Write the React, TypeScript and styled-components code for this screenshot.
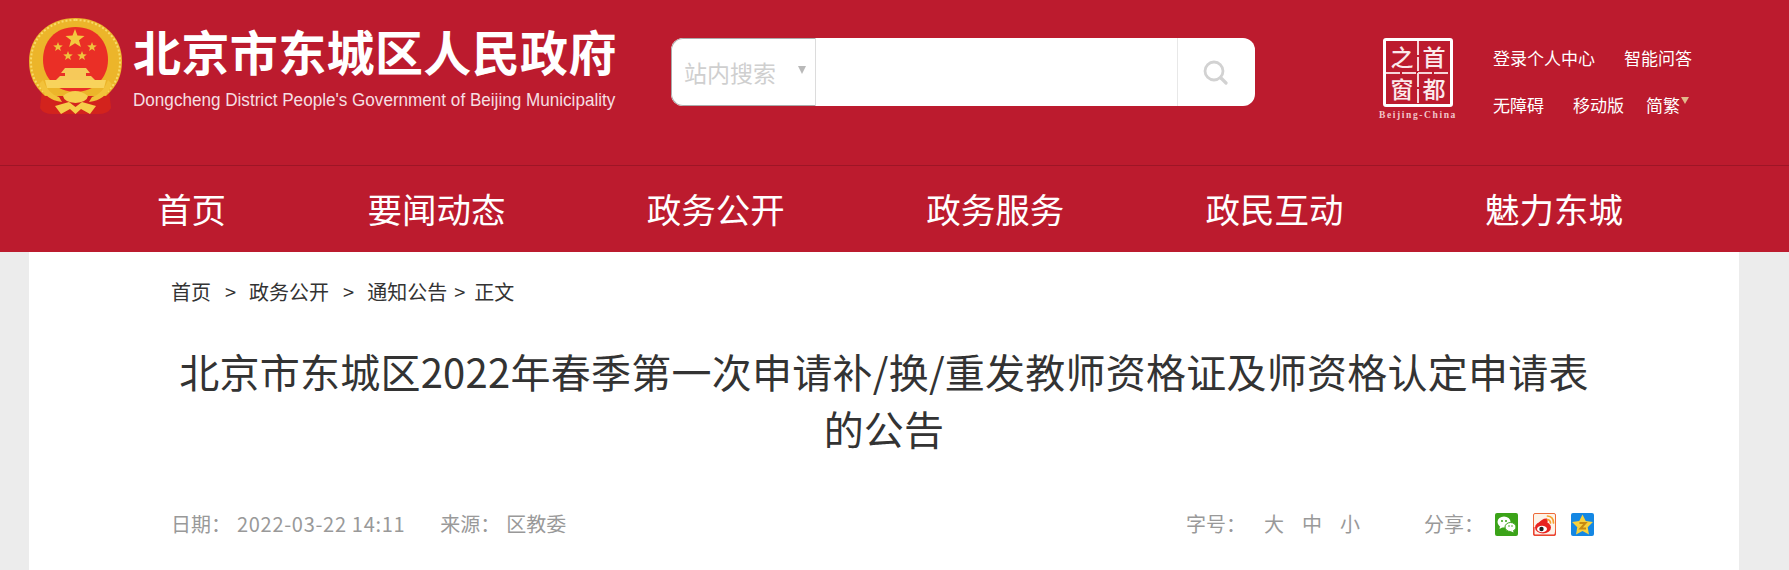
import styled, { createGlobalStyle } from 'styled-components';

const RED = '#bc1b2e';
const CJK = `'Noto Sans CJK SC', 'Liberation Sans', sans-serif`;

const GlobalStyle = createGlobalStyle`
  html, body {
    margin: 0;
    padding: 0;
    background: #ececec;
    font-family: ${CJK};
    overflow: hidden;
  }
  * { box-sizing: border-box; }
`;

const Page = styled.div`
  width: 1789px;
  height: 570px;
  overflow: hidden;
`;

const Header = styled.header`
  height: 166px;
  background: ${RED};
  border-bottom: 1px solid #9e1526;
  display: flex;
  align-items: flex-start;
  padding: 18px 0 0 29px;
`;

const Brand = styled.div`
  display: flex;
  width: 642px;
  gap: 11px;
`;

const BrandText = styled.div`
  display: flex;
  flex-direction: column;
  padding-top: 2px;
  color: #fff;
`;

const BrandName = styled.div`
  font-size: 48px;
  font-weight: 700;
  line-height: 60px;
  letter-spacing: 0.38px;
  white-space: nowrap;
`;

const BrandEn = styled.div`
  font-family: 'Liberation Sans', sans-serif;
  font-size: 18px;
  line-height: 20px;
  margin-top: 10px;
  white-space: nowrap;
  color: #f6dfe2;
  transform: scaleX(0.95);
  transform-origin: left center;
`;

const Search = styled.div`
  width: 584px;
  height: 68px;
  margin-top: 20px;
  display: flex;
  border-radius: 12px;
  background: #fff;
  overflow: hidden;
`;

const SearchSelect = styled.div`
  width: 145px;
  display: flex;
  align-items: center;
  justify-content: space-between;
  padding: 0 9px 0 12px;
  border: 1px solid #ababab;
  border-right: 1px solid #dcdcdc;
  border-radius: 12px 0 0 12px;
  color: #cfcfcf;
  font-size: 23px;
`;

const Caret = styled.i<{ $color?: string }>`
  width: 0;
  height: 0;
  margin-bottom: 4px;
  border-left: 4px solid transparent;
  border-right: 4px solid transparent;
  border-top: 8px solid ${(p) => p.$color || '#b9b9b9'};
`;

const SearchInput = styled.div`
  flex: 1;
`;

const SearchButton = styled.div`
  width: 78px;
  border-left: 1px solid #e8e8e8;
  display: flex;
  align-items: center;
  justify-content: center;
  padding-right: 3px;
`;

const CityMark = styled.div`
  width: 72px;
  margin: 20px 0 0 127px;
  display: flex;
  flex-direction: column;
  align-items: center;
`;

const CityGrid = styled.div`
  width: 70px;
  height: 69px;
  border: 3px solid #fff;
  border-radius: 3px;
  display: grid;
  grid-template-columns: 1fr 1fr;
  grid-template-rows: 1fr 1fr;
  color: #fbe9eb;
  font-size: 23px;
  font-weight: 500;
  line-height: 1;
  background:
    repeating-linear-gradient(#f6d5d9 0 14px, transparent 14px 16px) center / 2px 100% no-repeat,
    repeating-linear-gradient(90deg, #f6d5d9 0 14px, transparent 14px 16px) center / 100% 2px no-repeat;
`;

const CityCell = styled.span`
  display: flex;
  align-items: center;
  justify-content: center;
`;

const CityEn = styled.div`
  font-family: 'Liberation Serif', serif;
  font-size: 9.5px;
  font-weight: 700;
  letter-spacing: 1.6px;
  line-height: 11px;
  margin-top: 3px;
  color: #f1c6cb;
  white-space: nowrap;
`;

const TopLinks = styled.div`
  margin: 27px 0 0 39px;
  display: flex;
  flex-direction: column;
  gap: 21px;
  color: #fff;
  font-size: 17px;
  line-height: 26px;
`;

const LinkRow = styled.div<{ $gap: number }>`
  display: flex;
  align-items: flex-start;
  gap: ${(p) => p.$gap}px;
  white-space: nowrap;
`;

const LangLink = styled.span`
  display: flex;
  align-items: flex-start;
  margin-left: -7px;
  ${Caret} {
    margin: 5px 0 0 1px;
    border-left-width: 4px;
    border-right-width: 4px;
    border-top-width: 7px;
  }
`;

const Nav = styled.nav`
  height: 86px;
  background: ${RED};
  display: flex;
  align-items: center;
  gap: 141.4px;
  padding: 0 0 2px 157px;
  color: #fff;
  font-size: 34.5px;
  white-space: nowrap;
`;

const Article = styled.main`
  width: 1710px;
  height: 318px;
  margin-left: 29px;
  background: #fff;
  padding: 26px 142px 0;
`;

const Crumbs = styled.div`
  display: flex;
  font-size: 20px;
  line-height: 28px;
  color: #333;
  white-space: nowrap;
`;

const CrumbSep = styled.span<{ $tight?: boolean }>`
  margin: ${(p) => (p.$tight ? '0 9px 0 7px' : '0 13px 0 14px')};
`;

const Title = styled.h1`
  margin: 37px 0 0;
  font-size: 40px;
  font-weight: 400;
  line-height: 57px;
  letter-spacing: 0.25px;
  text-align: center;
  color: #333;
`;

const Meta = styled.div`
  margin-top: 53px;
  display: flex;
  align-items: center;
  font-size: 20px;
  line-height: 28px;
  color: #999;
  white-space: nowrap;
`;

const MetaLabel = styled.span<{ $gap: number; $left?: number }>`
  margin-left: ${(p) => p.$left || 0}px;
  margin-right: ${(p) => p.$gap}px;
`;

const MetaDate = styled.span`
  letter-spacing: 0.7px;
  margin-right: 35px;
`;

const MetaSpacer = styled.div`
  flex: 1;
`;

const SizeButton = styled.span`
  margin-right: 18px;
`;

const ShareButton = styled.a`
  display: block;
  width: 23px;
  height: 23px;
  margin-right: 15px;
  &:last-child { margin-right: 3px; }
  svg { display: block; }
`;

const EmblemSvg = styled.svg`
  flex-shrink: 0;
`;

const Star = ({ x, y, r, fill = '#f6d23c', inner = 0.42 }: { x: number; y: number; r: number; fill?: string; inner?: number }) => {
  const pts = Array.from({ length: 10 }, (_, i) => {
    const a = -Math.PI / 2 + (i * Math.PI) / 5;
    const d = i % 2 ? r * inner : r;
    return `${(x + d * Math.cos(a)).toFixed(2)},${(y + d * Math.sin(a)).toFixed(2)}`;
  }).join(' ');
  return <polygon points={pts} fill={fill} />;
};

const Emblem = () => (
  <EmblemSvg width="93" height="98" viewBox="0 0 93 98">
    <path d="M13 72 L11 90 Q14 96 24 96 L69 96 Q79 96 82 90 L80 72 Z" fill="#d3231d" />
    <path d="M46.5 0 C20 0 0 18 0 43 C0 58 5 68 16 78 L77 78 C88 68 93 58 93 43 C93 18 73 0 46.5 0 Z" fill="#ecb52a" />
    <path d="M46.5 2 C21 2 2 19 2 43 C2 58 7 67 17 76" fill="none" stroke="#f8da6a" strokeWidth="2" strokeDasharray="2 2" />
    <path d="M46.5 2 C72 2 91 19 91 43 C91 58 86 67 76 76" fill="none" stroke="#f8da6a" strokeWidth="2" strokeDasharray="2 2" />
    <path d="M46.5 9 C26 9 14 23 14 42 C14 60 28 74 46.5 74 C65 74 79 60 79 42 C79 23 67 9 46.5 9 Z" fill="#ea2f26" />
    <Star x={46} y={21} r={10} fill="#f3c93f" />
    <Star x={29} y={29} r={5} fill="#f0c23c" />
    <Star x={63} y={29} r={5} fill="#f0c23c" />
    <Star x={39} y={38} r={5} fill="#f0c23c" />
    <Star x={53} y={38} r={5} fill="#f0c23c" />
    <path d="M36 50 H57 L61 55 H57 V58 H62 L66 62 H27 L31 58 H36 V55 H32 Z" fill="#f6c95a" />
    <path d="M16 62 H77 L75 70 H18 Z" fill="#f8d35c" />
    <path d="M10 66 Q16 82 33 84 L30 79 Q19 76 14 62 Z" fill="#f2c23a" />
    <path d="M83 66 Q77 82 60 84 L63 79 Q74 76 79 62 Z" fill="#f2c23a" />
    <path d="M34 78 Q46 68 59 78 Q58 84 46.5 85 Q35 84 34 78 Z" fill="#f6cf4f" />
    <path d="M26 88 L40 84 L46.5 89 L53 84 L67 88 L61 96 L52 91 L46.5 96 L41 91 L32 96 Z" fill="#f6cd4a" />
  </EmblemSvg>
);

const SearchIcon = () => (
  <svg width="26" height="26" viewBox="0 0 26 26" fill="none" stroke="#d2d2d2" strokeLinecap="round">
    <circle cx="12" cy="12" r="9" strokeWidth="2.8" />
    <path d="M19 19 L24 24" strokeWidth="3.2" />
  </svg>
);

const WeChatIcon = () => (
  <svg width="23" height="23" viewBox="0 0 23 23">
    <rect width="23" height="23" rx="2" fill="#3ba319" />
    <ellipse cx="9" cy="9" rx="6.5" ry="5.5" fill="#fff" />
    <path d="M5 13 L4.5 16 L8 14 Z" fill="#fff" />
    <ellipse cx="15.5" cy="14" rx="5.5" ry="4.5" fill="#fff" stroke="#3ba319" />
    <path d="M18 17 L18.5 19.5 L15.5 18 Z" fill="#fff" />
    <circle cx="7" cy="8" r="1" fill="#3ba319" />
    <circle cx="11" cy="8" r="1" fill="#3ba319" />
    <circle cx="14" cy="13" r=".8" fill="#3ba319" />
    <circle cx="17" cy="13" r=".8" fill="#3ba319" />
  </svg>
);

const WeiboIcon = () => (
  <svg width="23" height="23" viewBox="0 0 23 23">
    <rect x=".5" y=".5" width="22" height="22" rx="1.5" fill="#fdf3e8" stroke="#ee6a3a" />
    <path d="M.5 22.5 H22.5 V16 L21.5 21.5 H1.5 V14 H.5 Z" fill="#e8231f" />
    <ellipse cx="10" cy="14.5" rx="8" ry="6" fill="#e8231f" />
    <path d="M5 11 Q9 5 14 5.5 Q15.5 8 14 11 Z" fill="#e8231f" />
    <ellipse cx="9" cy="16" rx="5" ry="3.2" fill="#fff" />
    <circle cx="8.5" cy="16" r="2.2" fill="#222" />
    <path d="M14.5 3 Q20.5 3.5 20.5 10 M14.5 6.5 Q17.5 7 17.5 10" fill="none" stroke="#f6a12c" strokeWidth="1.7" strokeLinecap="round" />
  </svg>
);

const QzoneIcon = () => (
  <svg width="23" height="23" viewBox="0 0 23 23">
    <rect width="23" height="23" rx="2" fill="#1487e3" />
    <Star x={11.5} y={12.5} r={11} fill="#f7d13c" inner={0.5} />
    <path d="M8.5 10 H14.5 L9.5 15.5 H15" fill="none" stroke="#c88a10" strokeWidth="2" />
  </svg>
);

export default function App() {
  return (
    <Page>
      <GlobalStyle />
      <Header>
        <Brand>
          <Emblem />
          <BrandText>
            <BrandName>北京市东城区人民政府</BrandName>
            <BrandEn>Dongcheng District People's Government of Beijing Municipality</BrandEn>
          </BrandText>
        </Brand>
        <Search>
          <SearchSelect>
            站内搜索
            <Caret />
          </SearchSelect>
          <SearchInput />
          <SearchButton>
            <SearchIcon />
          </SearchButton>
        </Search>
        <CityMark>
          <CityGrid>
            <CityCell>之</CityCell>
            <CityCell>首</CityCell>
            <CityCell>窗</CityCell>
            <CityCell>都</CityCell>
          </CityGrid>
          <CityEn>Beijing-China</CityEn>
        </CityMark>
        <TopLinks>
          <LinkRow $gap={29}>
            <span>登录个人中心</span>
            <span>智能问答</span>
          </LinkRow>
          <LinkRow $gap={29}>
            <span>无障碍</span>
            <span>移动版</span>
            <LangLink>
              简繁
              <Caret $color="#e2b98a" />
            </LangLink>
          </LinkRow>
        </TopLinks>
      </Header>
      <Nav>
        <span>首页</span>
        <span>要闻动态</span>
        <span>政务公开</span>
        <span>政务服务</span>
        <span>政民互动</span>
        <span>魅力东城</span>
      </Nav>
      <Article>
        <Crumbs>
          首页
          <CrumbSep>&gt;</CrumbSep>
          政务公开
          <CrumbSep>&gt;</CrumbSep>
          通知公告
          <CrumbSep $tight>&gt;</CrumbSep>
          正文
        </Crumbs>
        <Title>
          北京市东城区2022年春季第一次申请补/换/重发教师资格证及师资格认定申请表的公告
        </Title>
        <Meta>
          <MetaLabel $gap={6}>日期：</MetaLabel>
          <MetaDate>2022-03-22 14:11</MetaDate>
          <MetaLabel $gap={6}>来源：</MetaLabel>
          <span>区教委</span>
          <MetaSpacer />
          <MetaLabel $gap={18}>字号：</MetaLabel>
          <SizeButton>大</SizeButton>
          <SizeButton>中</SizeButton>
          <span>小</span>
          <MetaLabel $gap={11} $left={64}>分享：</MetaLabel>
          <ShareButton><WeChatIcon /></ShareButton>
          <ShareButton><WeiboIcon /></ShareButton>
          <ShareButton><QzoneIcon /></ShareButton>
        </Meta>
      </Article>
    </Page>
  );
}
